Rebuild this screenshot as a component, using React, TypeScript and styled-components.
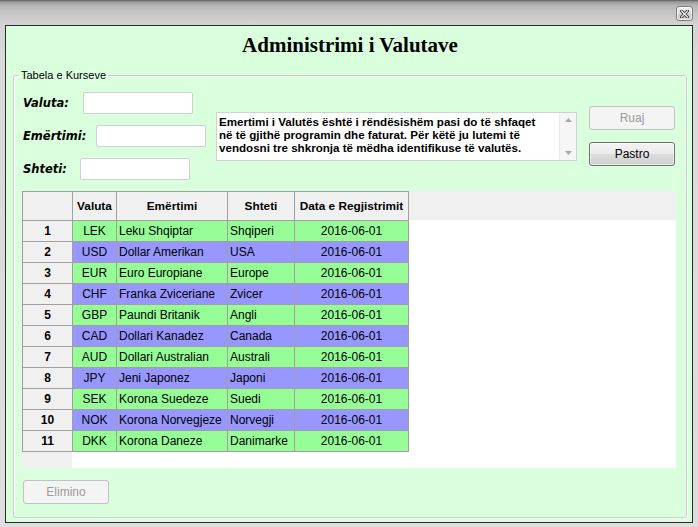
import React from "react";
import styled, { createGlobalStyle } from "styled-components";

const Global = createGlobalStyle`
  html, body { margin: 0; padding: 0; }
  body { width: 698px; height: 527px; overflow: hidden; font-family: "Liberation Sans", Arial, sans-serif; }
`;

const Frame = styled.div`
  width: 698px;
  height: 527px;
  box-sizing: border-box;
  padding: 0 5px 4px 5px;
  display: flex;
  flex-direction: column;
  background: linear-gradient(180deg, #5e5e5e 0px, #9c9c9c 2px, #b9b9b9 6px, #c4c4c4 12px, #d3d3d3 24px, #dadada 60px, #dedede 100%);
`;

const TitleBar = styled.div`
  height: 25px;
  flex: none;
  display: flex;
  justify-content: flex-end;
  align-items: flex-start;
  padding-top: 6px;
  box-sizing: border-box;
`;

const CloseBtn = styled.div`
  width: 17px;
  height: 15px;
  box-sizing: border-box;
  border: 1px solid #7d7d7d;
  border-radius: 3px;
  background: linear-gradient(180deg, #f4f4f4 0%, #dcdcdc 50%, #c9c9c9 51%, #d8d8d8 100%);
  display: flex;
  align-items: center;
  justify-content: center;
  box-shadow: inset 0 0 0 1px rgba(255,255,255,0.6);
`;

const Content = styled.div`
  flex: 1;
  border: 1px solid #2a2a2a;
  background: #d9ffdd;
  display: flex;
  flex-direction: column;
  padding: 0 5px 4px 7px;
`;

const Title = styled.h1`
  margin: 0;
  height: 43px;
  box-sizing: border-box;
  padding-top: 7px;
  text-align: center;
  font-family: "Liberation Serif", "Times New Roman", serif;
  font-weight: bold;
  font-size: 21px;
  line-height: 24px;
  color: #000;
`;

const Group = styled.fieldset`
  margin: 0;
  padding: 0;
  border: 1px solid #c9d2c9;
  border-radius: 3px;
  box-shadow: inset 1px 1px 0 #ffffff, 1px 1px 0 #ffffff;
  flex: 1;
  min-width: 0;
`;

const Legend = styled.legend`
  margin-left: 5px;
  padding: 0 2px;
  font-family: "Liberation Sans", Arial, sans-serif;
  font-size: 11px;
  line-height: 13px;
  color: #000;
`;

const GroupBody = styled.div`
  padding: 10px 9px 0 8px;
  display: flex;
  flex-direction: column;
`;

const TopSection = styled.div`
  display: flex;
  align-items: flex-start;
  padding-left: 1px;
`;

const FormCol = styled.div`
  width: 193px;
  display: flex;
  flex-direction: column;
  gap: 11px;
`;

const FormRow = styled.div`
  display: flex;
  align-items: center;
  height: 22px;
`;

const Label = styled.label<{ $w: number }>`
  width: ${(p) => p.$w}px;
  flex: none;
  font-family: "DejaVu Sans", Verdana, sans-serif;
  font-weight: bold;
  font-style: italic;
  font-size: 11.5px;
  color: #000;
  white-space: nowrap;
`;

const TextInput = styled.input`
  width: 110px;
  height: 22px;
  box-sizing: border-box;
  border: 1px solid #cdd0d4;
  border-radius: 2px;
  background: #fff;
  outline: none;
  padding: 0 3px;
  font-family: "Liberation Sans", Arial, sans-serif;
  font-size: 12px;
`;

const Note = styled.div`
  margin-top: 20px;
  width: 361px;
  height: 49px;
  box-sizing: border-box;
  border: 1px solid #cfd2d6;
  background: #fff;
  display: flex;
`;

const NoteText = styled.div`
  flex: 1;
  padding: 2px 0 0 2px;
  font-family: "Liberation Sans", Arial, sans-serif;
  font-weight: bold;
  font-size: 11.6px;
  line-height: 13px;
  color: #000;
  white-space: nowrap;
  overflow: hidden;
`;

const ScrollBar = styled.div`
  width: 17px;
  background: #f6f6f6;
  border-left: 1px solid #ececec;
  display: flex;
  flex-direction: column;
  justify-content: space-between;
  align-items: center;
  padding: 5px 0 5px;
  box-sizing: border-box;
`;

const ButtonCol = styled.div`
  margin-left: 12px;
  margin-top: 14px;
  display: flex;
  flex-direction: column;
  gap: 12px;
`;

const Button = styled.button<{ $disabled?: boolean }>`
  width: 86px;
  height: 24px;
  box-sizing: border-box;
  border-radius: 3px;
  font-family: "Liberation Sans", Arial, sans-serif;
  font-size: 12px;
  padding: 0;
  border: 1px solid ${(p) => (p.$disabled ? "#c2c2c2" : "#707070")};
  color: ${(p) => (p.$disabled ? "#9c9c9c" : "#000")};
  background: ${(p) =>
    p.$disabled
      ? "#f4f4f4"
      : "linear-gradient(180deg, #f3f3f3 0%, #ebebeb 48%, #dddddd 52%, #cfcfcf 100%)"};
  box-shadow: ${(p) => (p.$disabled ? "none" : "inset 0 0 0 1px rgba(255,255,255,0.55)")};
`;

const GridView = styled.div`
  margin-top: 11px;
  width: 654px;
  height: 277px;
  background:
    linear-gradient(#f0f0f0, #f0f0f0) 0 0 / 100% 29px no-repeat,
    linear-gradient(#f0f0f0, #f0f0f0) 0 0 / 50px 100% no-repeat,
    #ffffff;
`;

const Table = styled.div`
  display: grid;
  grid-template-columns: 50px 44px 111px 67px 114px;
  width: max-content;
  border-left: 1px solid #a0a0a0;
  border-top: 1px solid #a0a0a0;
`;

type Kind = "header" | "rowhead" | "data";

const Cell = styled.div<{ $kind: Kind; $align?: "left" | "center"; $bg?: string }>`
  box-sizing: border-box;
  height: ${(p) => (p.$kind === "header" ? "29px" : "21px")};
  border-right: 1px solid #a0a0a0;
  border-bottom: 1px solid #a0a0a0;
  display: flex;
  align-items: center;
  justify-content: ${(p) => (p.$align === "left" ? "flex-start" : "center")};
  padding-left: ${(p) => (p.$align === "left" ? "2px" : "0")};
  background: ${(p) => (p.$kind === "data" ? p.$bg : "#f0f0f0")};
  font-family: "Liberation Sans", Arial, sans-serif;
  font-size: ${(p) => (p.$kind === "header" ? "11.8px" : "12px")};
  font-weight: ${(p) => (p.$kind === "data" ? "normal" : "bold")};
  color: #000;
  white-space: nowrap;
  overflow: hidden;
`;

const Footer = styled.div`
  margin-top: 12px;
  padding-left: 1px;
  padding-bottom: 11px;
`;

const rows: [string, string, string][] = [
  ["LEK", "Leku Shqiptar", "Shqiperi"],
  ["USD", "Dollar Amerikan", "USA"],
  ["EUR", "Euro Europiane", "Europe"],
  ["CHF", "Franka Zviceriane", "Zvicer"],
  ["GBP", "Paundi Britanik", "Angli"],
  ["CAD", "Dollari Kanadez", "Canada"],
  ["AUD", "Dollari Australian", "Australi"],
  ["JPY", "Jeni Japonez", "Japoni"],
  ["SEK", "Korona Suedeze", "Suedi"],
  ["NOK", "Korona Norvegjeze", "Norvegji"],
  ["DKK", "Korona Daneze", "Danimarke"],
];

const fields: [string, number][] = [
  ["Valuta:", 60],
  ["Emërtimi:", 73],
  ["Shteti:", 57],
];

const GREEN = "#96fd96";
const BLUE = "#9797ff";

const CloseIcon = () => (
  <svg width="9" height="8" viewBox="0 0 9 8">
    <path d="M1.5 1 L7.5 7 M7.5 1 L1.5 7" stroke="#3a3a3a" strokeWidth="3" strokeLinecap="square" />
    <path d="M1.5 1 L7.5 7 M7.5 1 L1.5 7" stroke="#ffffff" strokeWidth="1.1" strokeLinecap="square" />
  </svg>
);

const Arrow = ({ up }: { up?: boolean }) => (
  <svg width="7" height="4" viewBox="0 0 7 4">
    <path d={up ? "M0 4 L3.5 0 L7 4 Z" : "M0 0 L3.5 4 L7 0 Z"} fill="#a8a8a8" />
  </svg>
);

export default function App() {
  return (
    <>
      <Global />
      <Frame>
        <TitleBar>
          <CloseBtn>
            <CloseIcon />
          </CloseBtn>
        </TitleBar>
        <Content>
          <Title>Administrimi i Valutave</Title>
          <Group>
            <Legend>Tabela e Kurseve</Legend>
            <GroupBody>
              <TopSection>
                <FormCol>
                  {fields.map(([label, w]) => (
                    <FormRow key={label}>
                      <Label $w={w}>{label}</Label>
                      <TextInput />
                    </FormRow>
                  ))}
                </FormCol>
                <Note>
                  <NoteText>
                    Emertimi i Valutës është i rëndësishëm pasi do të shfaqet
                    <br />
                    në të gjithë programin dhe faturat. Për këtë ju lutemi të
                    <br />
                    vendosni tre shkronja të mëdha identifikuse të valutës.
                  </NoteText>
                  <ScrollBar>
                    <Arrow up />
                    <Arrow />
                  </ScrollBar>
                </Note>
                <ButtonCol>
                  <Button $disabled>Ruaj</Button>
                  <Button>Pastro</Button>
                </ButtonCol>
              </TopSection>
              <GridView>
                <Table>
                  <Cell $kind="header" />
                  <Cell $kind="header">Valuta</Cell>
                  <Cell $kind="header">Emërtimi</Cell>
                  <Cell $kind="header">Shteti</Cell>
                  <Cell $kind="header">Data e Regjistrimit</Cell>
                  {rows.map(([code, name, country], i) => {
                    const bg = i % 2 === 0 ? GREEN : BLUE;
                    return (
                      <React.Fragment key={code}>
                        <Cell $kind="rowhead">{i + 1}</Cell>
                        <Cell $kind="data" $bg={bg}>{code}</Cell>
                        <Cell $kind="data" $bg={bg} $align="left">{name}</Cell>
                        <Cell $kind="data" $bg={bg} $align="left">{country}</Cell>
                        <Cell $kind="data" $bg={bg}>2016-06-01</Cell>
                      </React.Fragment>
                    );
                  })}
                </Table>
              </GridView>
              <Footer>
                <Button $disabled>Elimino</Button>
              </Footer>
            </GroupBody>
          </Group>
        </Content>
      </Frame>
    </>
  );
}
